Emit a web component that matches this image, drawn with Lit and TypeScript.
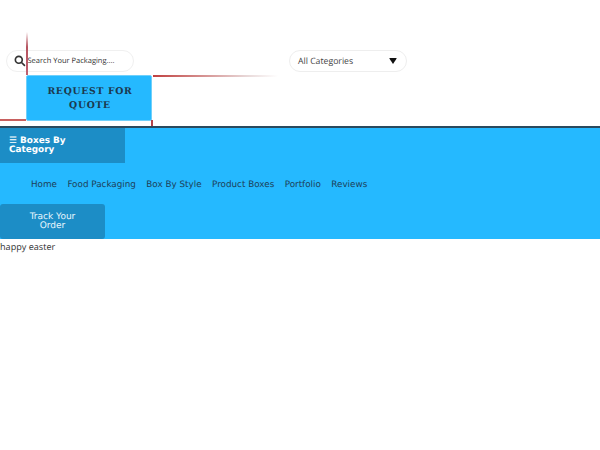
import { LitElement, html, css } from "lit";
import { customElement } from "lit/decorators.js";

@customElement("app-root")
export class AppRoot extends LitElement {
  static styles = css`
    :host { display: block; width: 600px; height: 450px; background: #fff; overflow: hidden; font-family: "Open Sans", sans-serif; color: #333; text-rendering: geometricPrecision; }
    .top { position: relative; height: 126px; display: flex; flex-direction: column; padding-top: 50px; box-sizing: border-box; }
    .row { display: flex; padding-left: 6px; }
    .search { box-sizing: border-box; width: 128px; height: 22px; border: 1px solid #f0f0f0; border-radius: 11px; display: flex; align-items: center; padding: 0 0 1px 7px; gap: 2px; font-size: 7.5px; color: #333; background: #fff; }
    .search svg { flex: none; margin-top: 1px; }
    .select { box-sizing: border-box; width: 118px; height: 22px; margin-left: 155px; border: 1px solid #eee; border-radius: 11px; display: flex; align-items: center; justify-content: space-between; padding: 0 9px 1px 8px; font-size: 8.7px; color: #444; background: #fff; }
    .caret { width: 0; height: 0; margin-top: 1px; border-left: 4.5px solid transparent; border-right: 4.5px solid transparent; border-top: 6px solid #111; border-radius: 1px; }
    .quote { box-sizing: border-box; width: 126px; height: 46px; margin: 3px 0 0 26px; padding: 2px 0 0 2px; background: #25b9ff; border: 1px solid #6fd0fb; border-radius: 2px; display: flex; align-items: center; justify-content: center; text-align: center; font-family: "DejaVu Serif", serif; font-weight: 700; font-size: 9.3px; line-height: 14px; letter-spacing: 0.7px; color: #1c3a50; position: relative; }
    .vline1 { position: absolute; left: 26px; top: 32px; width: 1.5px; height: 43px; background: linear-gradient(to bottom, #fff, #b5535f 35%, #c06070); }
    .hline1 { position: absolute; left: 153px; top: 75px; width: 125px; height: 1.5px; background: linear-gradient(to right, #c0403f, #e8d8d8 75%, #fff); }
    .hline2 { position: absolute; left: 0; top: 119px; width: 26px; height: 1.5px; background: #c8605f; }
    .vline2 { position: absolute; left: 151px; top: 120px; width: 1.5px; height: 6px; background: #b5434a; }
    .band { height: 111px; background: #25b9ff; border-top: 2px solid #2a4a5e; display: flex; flex-direction: column; justify-content: space-between; }
    .cat { box-sizing: border-box; width: 125px; height: 35px; background: #1c8dc6; color: #fff; font-family: "DejaVu Sans", sans-serif; font-weight: 700; font-size: 8.9px; line-height: 9px; padding: 9px 40px 0 9px; }
    .nav { display: flex; gap: 10.4px; padding: 3px 0 0 31px; font-family: "DejaVu Sans", sans-serif; font-size: 8.8px; color: #1d3f58; line-height: 12px; }
    .track { box-sizing: border-box; width: 105px; height: 35px; background: #1c8dc6; color: #e8f6fd; border-radius: 3px; font-family: "DejaVu Sans", sans-serif; font-size: 9px; line-height: 9px; text-align: center; padding: 9px 20px 0; }
    .body { font-size: 9.1px; line-height: 16px; color: #333; }
  `;

  render() {
    return html`
      <div class="top">
        <div class="row">
          <div class="search">
            <svg width="11.5" height="11.5" viewBox="0 0 11 11" fill="none" stroke="#333" stroke-width="1.6" stroke-linecap="round"><circle cx="4.6" cy="4.6" r="3.3"></circle><path d="M7.2 7.2 L10 10"></path></svg>
            <span>Search Your Packaging....</span>
          </div>
          <div class="select"><span>All Categories</span><span class="caret"></span></div>
        </div>
        <div class="quote"><span>REQUEST FOR<br />QUOTE</span></div>
        <div class="vline1"></div>
        <div class="hline1"></div>
        <div class="hline2"></div>
        <div class="vline2"></div>
      </div>
      <div class="band">
        <div class="cat">☰ Boxes By Category</div>
        <div class="nav">
          <span>Home</span><span>Food Packaging</span><span>Box By Style</span><span>Product Boxes</span><span>Portfolio</span><span>Reviews</span>
        </div>
        <div class="track">Track Your Order</div>
      </div>
      <div class="body">happy easter</div>
    `;
  }
}
